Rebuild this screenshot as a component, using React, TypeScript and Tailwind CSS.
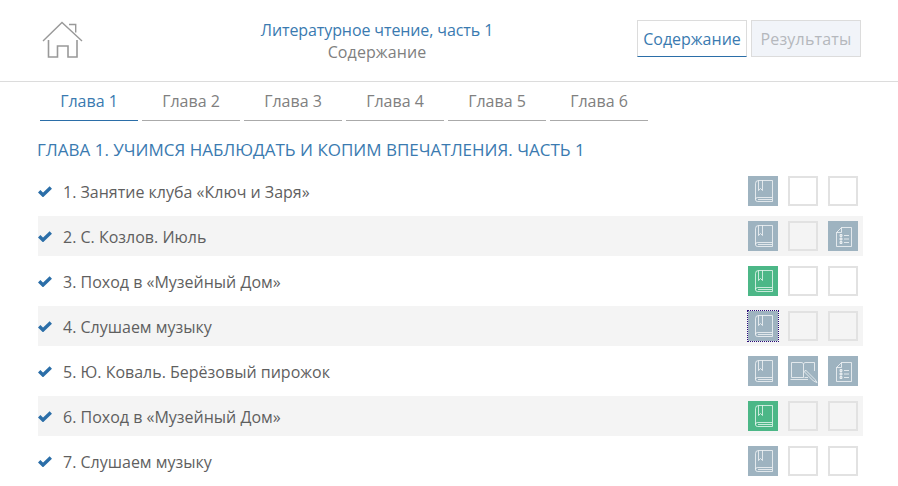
import React from "react";

const Book = () => (
  <svg width="30" height="30" viewBox="0 0 30 30" fill="none" stroke="#fff" strokeOpacity="0.7" strokeWidth="1">
    <path d="M10.5 4.5H24.5V21.5H9.5A2 2 0 0 0 7.5 23.5A2 2 0 0 0 9.5 25.5H24.5" />
    <path d="M7.5 23.5V7.5A3 3 0 0 1 10.5 4.5" />
    <path d="M10.5 4.5V14.5L12.5 12.5L14.5 14.5V4.5" />
    <path d="M24.5 21.5V25.5M10 23.5H24" />
  </svg>
);

const Doc = () => (
  <svg width="30" height="30" viewBox="0 0 30 30" fill="none" stroke="#fff" strokeOpacity="0.7" strokeWidth="1">
    <path d="M13.5 6.5H23.5V25.5H8.5V11.5Z" />
    <path d="M8.5 11.5H13.5V6.5" />
    <path d="M12 13.5h2v2h-2zM12 17h2v2h-2zM12 20.5h2v2h-2z" fill="#fff" fillOpacity="0.4" />
    <path d="M16 14.5H21M16 18H21M16 21.5H21" />
  </svg>
);

const OpenBook = () => (
  <svg width="30" height="30" viewBox="0 0 30 30" fill="none" stroke="#fff" strokeOpacity="0.7" strokeWidth="1">
    <path d="M3.5 6.5H13C14.5 6.5 15 7 15.5 8V21.5H3.5V6.5Z" />
    <path d="M15.5 8C16 7 16.5 6.5 18 6.5H26.5V15" />
    <path d="M2.5 23.5H20" />
    <path d="M16.5 21.5H20" />
    <path d="M17.5 14L27 23.5L29 26.5L25.5 25L16.5 16Z" />
  </svg>
);

type Cell = { kind: "none" | "book" | "doc" | "open"; green?: boolean; focus?: boolean };

const Tile = ({ kind, green, focus }: Cell) => {
  if (kind === "none") {
    return <div className="w-[30px] h-[30px] border-2 border-[#e2e2e2]" />;
  }
  return (
    <div
      className={`w-[30px] h-[30px] ${green ? "bg-[#4cb787]" : "bg-[#9eb3c0]"} ${
        focus ? "outline-1 outline-dotted outline-[#2a0a78]" : ""
      }`}
    >
      {kind === "book" && <Book />}
      {kind === "doc" && <Doc />}
      {kind === "open" && <OpenBook />}
    </div>
  );
};

const rows: { t: string; c: Cell[] }[] = [
  { t: "1. Занятие клуба «Ключ и Заря»", c: [{ kind: "book" }, { kind: "none" }, { kind: "none" }] },
  { t: "2. С. Козлов. Июль", c: [{ kind: "book" }, { kind: "none" }, { kind: "doc" }] },
  { t: "3. Поход в «Музейный Дом»", c: [{ kind: "book", green: true }, { kind: "none" }, { kind: "none" }] },
  { t: "4. Слушаем музыку", c: [{ kind: "book", focus: true }, { kind: "none" }, { kind: "none" }] },
  { t: "5. Ю. Коваль. Берёзовый пирожок", c: [{ kind: "book" }, { kind: "open" }, { kind: "doc" }] },
  { t: "6. Поход в «Музейный Дом»", c: [{ kind: "book", green: true }, { kind: "none" }, { kind: "none" }] },
  { t: "7. Слушаем музыку", c: [{ kind: "book" }, { kind: "none" }, { kind: "none" }] },
];

const tabs = ["Глава 1", "Глава 2", "Глава 3", "Глава 4", "Глава 5", "Глава 6"];

export default function App() {
  return (
    <div className="w-[898px] h-[486px] overflow-hidden bg-white text-[16px] font-['Open_Sans',sans-serif] text-[#5f5f5f]">
      <header className="h-[82px] border-b border-[#dcdcdc] flex items-start">
        <div className="ml-[42px] mt-[20px] w-[41px] h-[40px]">
          <svg width="41" height="40" viewBox="0 0 41 40" fill="none" stroke="#999" strokeWidth="1.4">
            <path d="M1 21L20 2.5L40 21" />
            <path d="M27 4.5H33.7V12.5" />
            <path d="M6.5 20V37H15.5V26H26V37H35V20" strokeWidth="1.6" />
          </svg>
        </div>
        <div className="w-[400px] ml-[94px] mt-[19px] text-center leading-[23px]">
          <div className="text-[#3a7ab0] tracking-[-0.1px]">Литературное чтение, часть 1</div>
          <div className="text-[#808080] -mt-[1px] tracking-[0.1px]">Содержание</div>
        </div>
        <div className="ml-[60px] mt-[20px] flex gap-[4px]">
          <div className="w-[110px] h-[37px] border border-[#dcdcdc] border-b-[#2b6ea8] flex items-center justify-center text-[#3a7ab0]">
            Содержание
          </div>
          <div className="w-[110px] h-[37px] border border-[#dcdcdc] bg-[#f1f4f9] flex items-center justify-center text-[#b5b8bd] tracking-[0.2px]">
            Результаты
          </div>
        </div>
      </header>
      <nav className="ml-[40px] flex gap-[4px]">
        {tabs.map((t, i) => (
          <div
            key={t}
            className={`w-[98px] h-[39px] border-b flex items-center justify-center ${
              i === 0 ? "border-[#2b6ea8] text-[#3a7ab0]" : "border-[#aaa] text-[#808080]"
            }`}
          >
            {t}
          </div>
        ))}
      </nav>
      <h2 className="ml-[37px] mt-[18px] leading-[22px] text-[17px] text-[#3a7ab0] font-normal">
        ГЛАВА 1. УЧИМСЯ НАБЛЮДАТЬ И КОПИМ ВПЕЧАТЛЕНИЯ. ЧАСТЬ 1
      </h2>
      <div className="ml-[38px] w-[825px] mt-[10px] flex flex-col gap-[5px]">
        {rows.map((r, i) => (
          <div key={i} className={`h-[40px] flex items-center ${i % 2 ? "bg-[#f4f4f4]" : ""}`}>
            <svg width="14" height="11" viewBox="0 0 14 11">
              <path d="M1.2 5.2L5 9L12.8 1.6" fill="none" stroke="#2b6ea8" strokeWidth="3.4" />
            </svg>
            <span className="ml-[11px] mt-[2px] flex-1">{r.t}</span>
            <div className="flex gap-[10px] mr-[5px]">
              {r.c.map((c, j) => (
                <Tile key={j} {...c} />
              ))}
            </div>
          </div>
        ))}
      </div>
    </div>
  );
}
